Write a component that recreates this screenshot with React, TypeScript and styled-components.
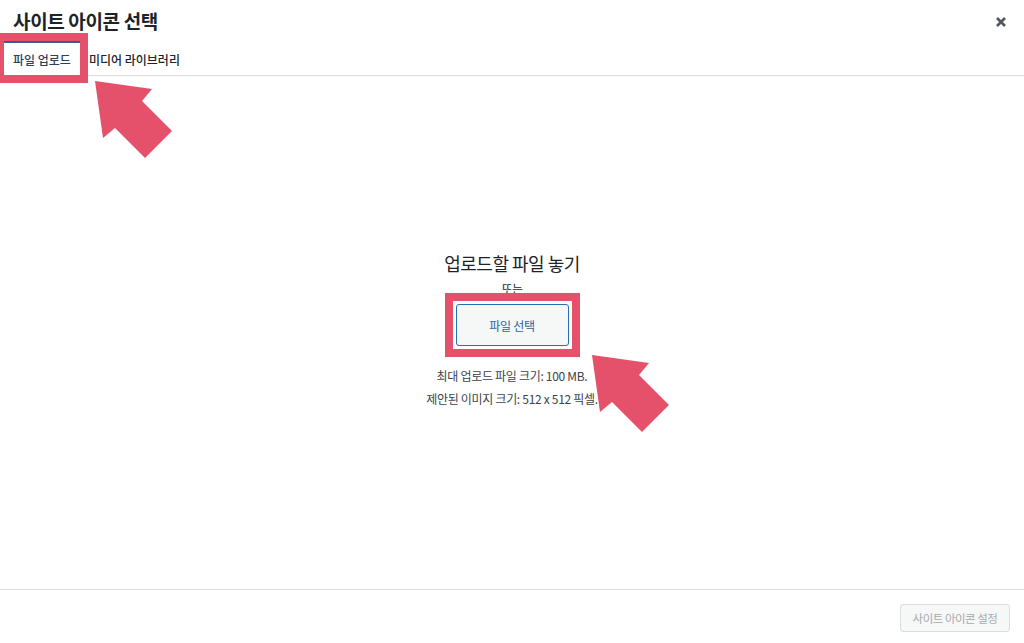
import React from "react";
import styled, { createGlobalStyle } from "styled-components";

const ACCENT = "#e5506a";

const GlobalStyle = createGlobalStyle`
  html, body {
    margin: 0;
    padding: 0;
    background: #ffffff;
  }
  body {
    font-family: "Noto Sans CJK KR", "Noto Sans", "Liberation Sans", sans-serif;
    color: #1d2327;
  }
  * { box-sizing: border-box; }
`;

const Modal = styled.div`
  position: relative;
  width: 1024px;
  height: 643px;
  display: flex;
  flex-direction: column;
  background: #ffffff;
  overflow: hidden;
`;

const Header = styled.header`
  height: 41px;
  display: flex;
  align-items: center;
  justify-content: space-between;
  padding: 0 17px 0 13px;
`;

const Title = styled.h1`
  margin: 0;
  font-size: 19px;
  line-height: 41px;
  font-weight: 600;
  letter-spacing: -0.35px;
  color: #1d2327;
`;

const CloseButton = styled.button`
  width: 12px;
  height: 12px;
  padding: 0;
  border: 0;
  background: transparent;
  display: flex;
  align-items: center;
  justify-content: center;
  margin-top: 2px;
  color: #50575e;
`;

const Router = styled.nav`
  height: 35px;
  display: flex;
  align-items: stretch;
  padding-left: 4px;
  border-bottom: 1px solid #dcdcde;
`;

const Tab = styled.div<{ $active?: boolean }>`
  height: 34px;
  display: flex;
  align-items: center;
  padding: 0 9px;
  font-size: 12px;
  letter-spacing: 0;
  font-weight: 500;
  color: ${(p) => (p.$active ? "#2f4058" : "#1d2327")};
  background: #ffffff;
  border-top: 2px solid ${(p) => (p.$active ? "#3d5a96" : "transparent")};
  outline: ${(p) => (p.$active ? `8px solid ${ACCENT}` : "none")};
  position: relative;
  z-index: ${(p) => (p.$active ? 1 : 0)};
`;

const Content = styled.main`
  flex: 1;
  display: flex;
  flex-direction: column;
  align-items: center;
  justify-content: center;
  padding-bottom: 5px;
`;

const DropTitle = styled.h2`
  margin: 0;
  font-size: 18px;
  line-height: 24px;
  font-weight: 400;
  letter-spacing: -0.5px;
  color: #1d2327;
`;

const OrText = styled.p`
  margin: 5px 0 0;
  font-size: 12px;
  line-height: 18px;
  letter-spacing: -0.5px;
  color: #1d2327;
`;

const HighlightFrame = styled.div`
  position: relative;
  margin-top: -5px;
  padding: 3px;
  border: 8px solid ${ACCENT};
  background: #ffffff;
`;

const SelectButton = styled.button`
  display: block;
  width: 113px;
  height: 42px;
  border: 1px solid #2271b1;
  border-radius: 3px;
  background: #f6f7f7;
  color: #2c63a0;
  font-family: inherit;
  font-size: 12px;
  letter-spacing: -0.3px;
`;

const Info = styled.p<{ $first?: boolean }>`
  margin: ${(p) => (p.$first ? "9px" : "3px")} 0 0;
  font-size: 12px;
  line-height: 20px;
  letter-spacing: -0.3px;
  color: #3c434a;
`;

const Footer = styled.footer`
  height: 54px;
  border-top: 1px solid #dcdcde;
  display: flex;
  align-items: center;
  justify-content: flex-end;
  padding: 0 14px 0 0;
`;

const PrimaryButton = styled.button`
  width: 110px;
  height: 28px;
  margin-top: 2px;
  border: 1px solid #dcdcde;
  border-radius: 3px;
  background: #f6f7f7;
  color: #a7aaad;
  font-family: inherit;
  font-size: 11.5px;
  letter-spacing: -0.5px;
`;

const Arrow = styled.svg<{ $left: number; $top: number }>`
  position: absolute;
  left: ${(p) => p.$left}px;
  top: ${(p) => p.$top}px;
  width: 80px;
  height: 80px;
  z-index: 5;
  pointer-events: none;
`;

const ARROW_POINTS = "0,0 57,8 47,20 77,50 50,77 20,47 8,57";

const PointerArrow = ({ left, top }: { left: number; top: number }) => (
  <Arrow $left={left} $top={top} viewBox="0 0 80 80">
    <polygon points={ARROW_POINTS} fill={ACCENT} />
  </Arrow>
);

export default function App() {
  return (
    <>
      <GlobalStyle />
      <Modal>
        <Header>
          <Title>사이트 아이콘 선택</Title>
          <CloseButton aria-label="닫기">
            <svg width="10" height="10" viewBox="0 0 10 10">
              <path d="M1 1 L9 9 M9 1 L1 9" stroke="currentColor" strokeWidth="2.6" strokeLinecap="butt" />
            </svg>
          </CloseButton>
        </Header>
        <Router>
          <Tab $active>파일 업로드</Tab>
          <Tab>미디어 라이브러리</Tab>
        </Router>
        <Content>
          <DropTitle>업로드할 파일 놓기</DropTitle>
          <OrText>또는</OrText>
          <HighlightFrame>
            <SelectButton>파일 선택</SelectButton>
          </HighlightFrame>
          <Info $first>최대 업로드 파일 크기: 100 MB.</Info>
          <Info>제안된 이미지 크기: 512 x 512 픽셀.</Info>
        </Content>
        <Footer>
          <PrimaryButton disabled>사이트 아이콘 설정</PrimaryButton>
        </Footer>
        <PointerArrow left={95} top={81} />
        <PointerArrow left={592} top={355} />
      </Modal>
    </>
  );
}
